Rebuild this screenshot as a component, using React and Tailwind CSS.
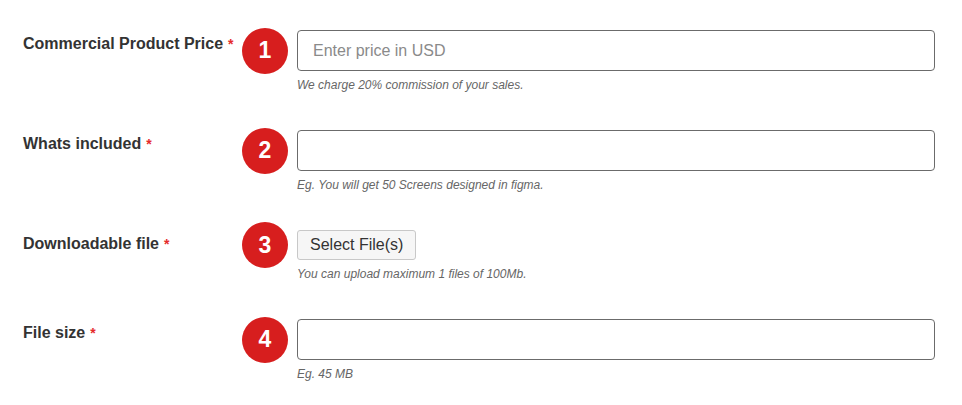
const fields = [
  { label: "Commercial Product Price", type: "input", placeholder: "Enter price in USD", help: "We charge 20% commission of your sales." },
  { label: "Whats included", type: "input", placeholder: "", help: "Eg. You will get 50 Screens designed in figma." },
  { label: "Downloadable file", type: "file", help: "You can upload maximum 1 files of 100Mb." },
  { label: "File size", type: "input", placeholder: "", help: "Eg. 45 MB" },
];

function Badge({ n, small }) {
  return (
    <div
      className={
        small
          ? "w-[46px] h-[46px] -my-[8px] shrink-0 rounded-full bg-[#d71e1e] flex items-center justify-center text-white text-[23px] font-bold leading-none"
          : "w-[46px] h-[46px] -my-[3px] shrink-0 rounded-full bg-[#d71e1e] flex items-center justify-center text-white text-[23px] font-bold leading-none"
      }
    >
      {n}
    </div>
  );
}

export default function App() {
  return (
    <div className="bg-white min-h-screen pt-[30px] pl-[23px] pr-[27px] font-['Liberation_Sans',Arial,sans-serif]">
      <div className="flex flex-col gap-[38px]">
        {fields.map((f, i) => (
          <div key={i} className="flex items-start">
            <div className="w-[219px] shrink-0 pt-[4px] text-[16px] leading-[20px] font-bold text-[#333]">
              {f.label}
              <span className="text-[#e52b2b] text-[14px] ml-[5px] align-top">*</span>
            </div>
            <div className="flex-1 flex flex-col">
              <div className="flex items-center gap-[9px]">
                <Badge n={i + 1} small={f.type === "file"} />
                {f.type === "file" ? (
                  <button className="h-[30px] px-[12px] border border-[#c8c8c8] rounded-[3px] bg-[#f6f6f6] text-[16px] text-[#333]">
                    Select File(s)
                  </button>
                ) : (
                  <input
                    className="flex-1 h-[41px] border border-[#6b6b6b] rounded-[4px] px-[15px] text-[16px] text-[#333] placeholder:text-[#8a8a8a] outline-none"
                    placeholder={f.placeholder}
                  />
                )}
              </div>
              <p className="ml-[55px] mt-[8px] text-[12px] leading-[13px] italic text-[#666]">{f.help}</p>
            </div>
          </div>
        ))}
      </div>
    </div>
  );
}
